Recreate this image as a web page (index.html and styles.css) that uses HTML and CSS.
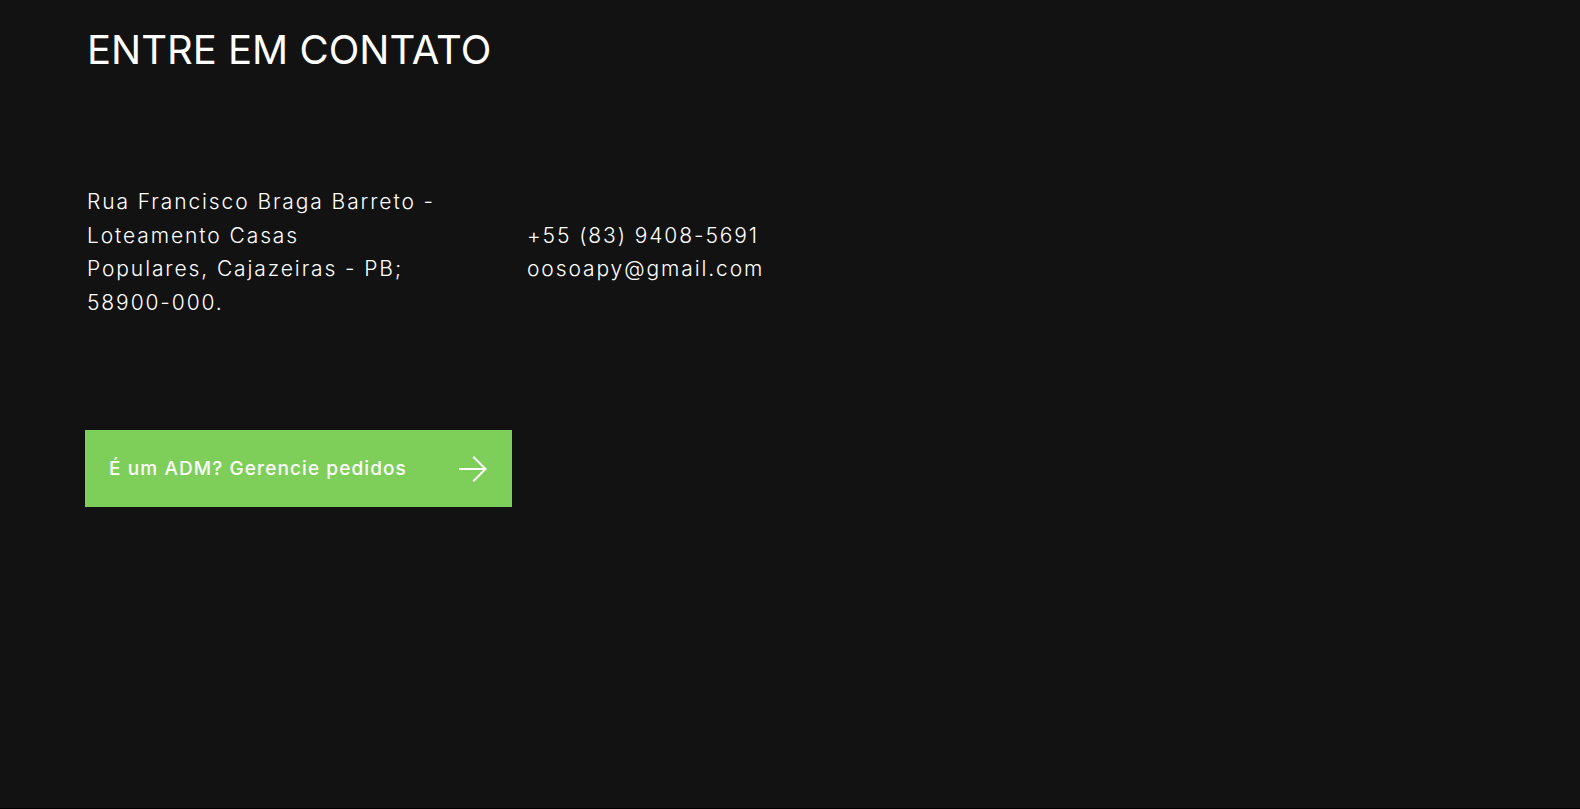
FILE: index.html
```html
<!DOCTYPE html>
<html lang="pt-BR">
<head>
<meta charset="utf-8">
<title>Entre em contato</title>
<link rel="stylesheet" href="styles.css">
</head>
<body>
<main class="contact">
  <h1 class="contact__title">ENTRE EM CONTATO</h1>
  <div class="contact__info">
    <p class="contact__address">Rua Francisco Braga Barreto -<br>Loteamento Casas<br>Populares, Cajazeiras - PB;<br>58900-000.</p>
    <p class="contact__reach">+55 (83) 9408-5691<br>oosoapy@gmail.com</p>
  </div>
  <a class="contact__admin" href="#">
    <span class="contact__admin-label">É um ADM? Gerencie pedidos</span>
    <svg class="contact__admin-arrow" width="28" height="26" viewBox="0 0 28 26" fill="none" stroke="#ffffff" stroke-width="2" stroke-linecap="square">
      <path d="M1 13H26"/>
      <path d="M15 1.5L26.5 13L15 24.5"/>
    </svg>
  </a>
</main>
</body>
</html>
```

FILE: styles.css
```css
html {
  background: #000;
}
body {
  margin: 0;
  font-family: Inter, "Noto Sans", sans-serif;
  color: #ffffff;
}
.contact {
  height: 808px;
  box-sizing: border-box;
  background: #121212;
  padding: 26px 0 0 85px;
  display: flex;
  flex-direction: column;
}
.contact__title {
  margin: 0 0 0 2px;
  font-size: 40px;
  line-height: 48px;
  font-weight: 400;
}
.contact__info {
  margin-top: 111px;
  display: flex;
  align-items: center;
}
.contact__address,
.contact__reach {
  margin: 0;
  font-size: 21px;
  line-height: 33.6px;
  font-weight: 300;
  letter-spacing: 1.9px;
}
.contact__address {
  width: 440px;
  padding-left: 2px;
}
.contact__admin {
  margin-top: 111px;
  width: 427px;
  height: 77px;
  box-sizing: border-box;
  padding: 0 25px 0 24px;
  background: #7ecf5a;
  display: flex;
  align-items: center;
  justify-content: space-between;
  text-decoration: none;
  color: #ffffff;
}
.contact__admin-label {
  font-size: 19px;
  font-weight: 500;
  letter-spacing: 1.1px;
}
.contact__admin-arrow {
  display: block;
}
```
